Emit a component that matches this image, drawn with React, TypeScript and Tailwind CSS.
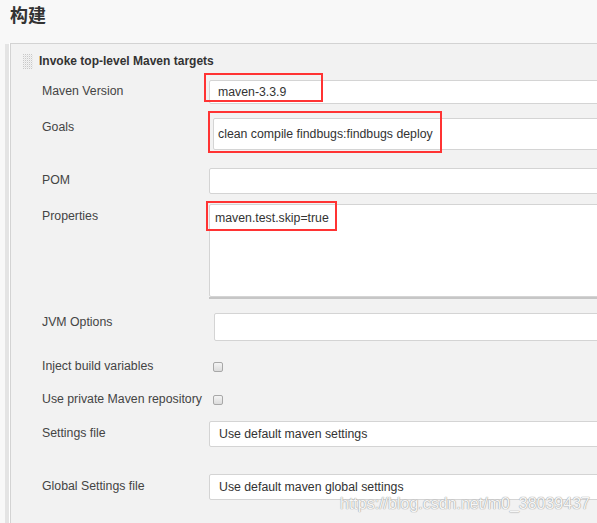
import React from "react";

const Handle = () => (
  <svg width="10" height="15" viewBox="0 0 10 15" className="shrink-0">
    {[0, 2, 4, 6, 8].map((x) =>
      [0, 2, 4, 6, 8, 10, 12, 14].map((y) => (
        <rect key={`${x}-${y}`} x={x} y={y} width="1" height="1" fill="#c8c8c8" />
      ))
    )}
    {[1, 3, 5, 7, 9].map((x) =>
      [1, 3, 5, 7, 9, 11, 13].map((y) => (
        <rect key={`b${x}-${y}`} x={x} y={y} width="1" height="1" fill="#e6e6e6" />
      ))
    )}
  </svg>
);

const Label = ({ text, pt }: { text: string; pt: string }) => (
  <div className={`w-[167px] shrink-0 whitespace-nowrap text-[12.3px] leading-[16px] text-[#444] ${pt}`}>{text}</div>
);

const Checkbox = () => (
  <div className="mt-[4px] ml-[4px] h-[10px] w-[10px] rounded-[2px] border border-[#a8a8a8] bg-gradient-to-b from-[#f4f4f4] to-[#dcdcdc]" />
);

export default function App() {
  return (
    <div className="relative h-[523px] w-[597px] overflow-hidden bg-[#f8f8f8] font-['Liberation_Sans',Arial,sans-serif]">
      <h1 className="h-[43px] pl-[10px] pt-[2px] font-['Noto_Sans_CJK_SC',sans-serif] text-[18px] font-bold leading-[24px] text-[#333]">
        构建
      </h1>

      <div className="flex h-[480px]">
        <div className="w-[5px]" />
        <div className="mt-[1px] w-[4px] bg-[#e4e4e4]" />
        <div className="w-[1px] bg-white" />
        <div className="flex-1 overflow-hidden border-l border-t border-[#d3d3d3] bg-[#f2f2f2] pl-[12px]">
          {/* title */}
          <div className="mt-[10px] flex h-[15px] items-center gap-[6px]">
            <Handle />
            <span className="text-[12px] font-bold leading-[15px] text-[#333]">
              Invoke top-level Maven targets
            </span>
          </div>

          <div className="pl-[19px]">
            {/* Maven Version */}
            <div className="mt-[11px] flex">
              <Label text="Maven Version" pt="pt-[3px]" />
              <div className="h-[24px] w-[420px] shrink-0 rounded-[2px] border border-[#d4d4d4] bg-white pl-[8px] text-[12.3px] leading-[22px] text-[#333]">
                maven-3.3.9
              </div>
            </div>

            {/* Goals */}
            <div className="mt-[14px] flex">
              <Label text="Goals" pt="pt-[1px]" />
              <div className="ml-[4px] h-[32px] w-[420px] shrink-0 rounded-[2px] border border-[#d4d4d4] bg-white pl-[4px] text-[12.3px] leading-[30px] text-[#333]">
                clean compile findbugs:findbugs deploy
              </div>
            </div>

            {/* POM */}
            <div className="mt-[18px] flex">
              <Label text="POM" pt="pt-[4px]" />
              <div className="h-[26px] w-[420px] shrink-0 rounded-[2px] border border-[#d4d4d4] bg-white" />
            </div>

            {/* Properties */}
            <div className="mt-[10px] flex">
              <Label text="Properties" pt="pt-[4px]" />
              <div className="w-[420px] shrink-0">
                <div className="h-[93px] rounded-[2px] border border-[#d4d4d4] bg-white pl-[5px] pt-[5px] text-[12.3px] leading-[16px] text-[#333]">
                  maven.test.skip=true
                </div>
                <div className="h-[2px] bg-[#c6c6c6]" />
              </div>
            </div>

            {/* JVM Options */}
            <div className="mt-[14px] flex">
              <Label text="JVM Options" pt="pt-[1px]" />
              <div className="ml-[5px] h-[28px] w-[420px] shrink-0 rounded-[2px] border border-[#d4d4d4] bg-white" />
            </div>

            {/* Inject build variables */}
            <div className="mt-[17px] flex h-[16px]">
              <Label text="Inject build variables" pt="pt-0" />
              <Checkbox />
            </div>

            {/* Use private Maven repository */}
            <div className="mt-[17px] flex h-[16px]">
              <Label text="Use private Maven repository" pt="pt-0" />
              <Checkbox />
            </div>

            {/* Settings file */}
            <div className="mt-[14px] flex">
              <Label text="Settings file" pt="pt-[4px]" />
              <div className="h-[26px] w-[420px] shrink-0 rounded-[2px] border border-[#d4d4d4] bg-white pl-[9px] text-[12.3px] leading-[24px] text-[#333]">
                Use default maven settings
              </div>
            </div>

            {/* Global Settings file */}
            <div className="mt-[27px] flex">
              <Label text="Global Settings file" pt="pt-[4px]" />
              <div className="h-[26px] w-[420px] shrink-0 rounded-[2px] border border-[#d4d4d4] bg-white pl-[9px] text-[12.3px] leading-[24px] text-[#333]">
                Use default maven global settings
              </div>
            </div>
          </div>
        </div>
      </div>

      {/* red annotation boxes */}
      <div className="absolute left-[204px] top-[73px] h-[29px] w-[119px] border-2 border-[#f33]" />
      <div className="absolute left-[208px] top-[111px] h-[42px] w-[234px] border-2 border-[#f33]" />
      <div className="absolute left-[206px] top-[201px] h-[30px] w-[131px] border-2 border-[#f33]" />

      {/* watermark */}
      <div className="absolute left-[340px] top-[495px] text-[16px] leading-[18px] text-[#f6f6f6] [text-shadow:0_0_1px_#999,0_0_1px_#999]">
        https://blog.csdn.net/m0_38039437
      </div>
    </div>
  );
}
